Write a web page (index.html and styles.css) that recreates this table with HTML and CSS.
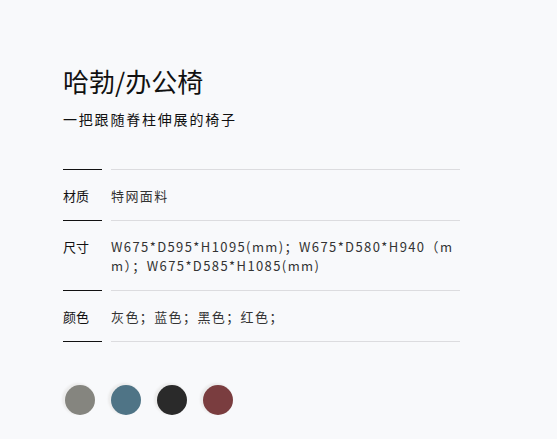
FILE: index.html
```html
<!DOCTYPE html>
<html lang="zh-CN">
<head>
    <meta charset="UTF-8">
    <meta name="viewport" content="width=device-width, initial-scale=1.0">
    <title>哈勃/办公椅</title>
    <link rel="stylesheet" href="styles.css">
</head>
<body>

    <section class="product">

        <h1 class="product-title">哈勃/办公椅</h1>
        <p class="product-sub">一把跟随脊柱伸展的椅子</p>

        <div class="specs">
            <div class="spec-row">
                <span class="spec-label">材质</span>
                <span class="spec-value">特网面料</span>
            </div>
            <div class="spec-row">
                <span class="spec-label">尺寸</span>
                <span class="spec-value">W675*D595*H1095(mm)；W675*D580*H940（mm）；W675*D585*H1085(mm)</span>
            </div>
            <div class="spec-row">
                <span class="spec-label">颜色</span>
                <span class="spec-value">灰色；蓝色；黑色；红色；</span>
            </div>
        </div>

        <ul class="swatches">
            <li class="swatch grey"></li>
            <li class="swatch blue"></li>
            <li class="swatch black"></li>
            <li class="swatch red"></li>
        </ul>

    </section>

</body>
</html>
```

FILE: styles.css
```css
* {
    box-sizing: border-box;
}

body {
    margin: 0;
    background-color: #f8f9fb;
    color: #111;
    font-family: "Noto Sans CJK SC", "Noto Sans", sans-serif;
}

.product {
    padding: 63px 0 0 63px;
    width: 460px;
}

.product-title {
    margin: 0;
    font-size: 26px;
    font-weight: 400;
    line-height: 36px;
}

.product-sub {
    margin: 10px 0 0;
    font-size: 14px;
    line-height: 20px;
    letter-spacing: 1.8px;
}

.specs {
    margin-top: 40px;
}

.spec-row {
    display: grid;
    grid-template-columns: 39px 1fr;
    column-gap: 9px;
}

.spec-row > span {
    border-top: 1px solid #dcdcdf;
    padding: 16px 0 15px;
    font-size: 13px;
    line-height: 19px;
}

.spec-row > .spec-label {
    border-top-color: #111;
    color: #111;
}

.spec-row:last-child > span {
    border-bottom: 1px solid #dcdcdf;
}

.spec-row:last-child > .spec-label {
    border-bottom-color: #111;
}

.spec-value {
    color: #333;
    letter-spacing: 1.4px;
    word-break: break-all;
}

.swatches {
    list-style: none;
    margin: 43px 0 0;
    padding: 0 0 0 2px;
    display: flex;
    gap: 16px;
}

.swatch {
    width: 30px;
    height: 30px;
    border-radius: 50%;
    box-shadow: -2px -1px 2px 1px #ececec;
}

.grey { background-color: #85857f; }
.blue { background-color: #4f7486; }
.black { background-color: #2a2a2a; }
.red { background-color: #7a3d3f; }
```
